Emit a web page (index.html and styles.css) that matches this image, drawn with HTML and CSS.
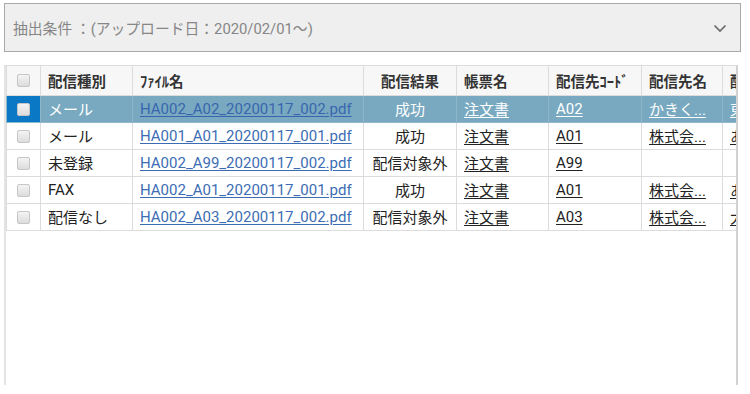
FILE: index.html
```html
<!DOCTYPE html>
<html lang="ja">
<head>
    <meta charset="UTF-8">
    <meta name="viewport" content="width=device-width, initial-scale=1.0">
    <title>配信履歴</title>
    <link rel="stylesheet" href="styles.css">
</head>
<body>
    <div class="page">
        <div class="filter-bar">
            <span class="filter-text">抽出条件 ：(アップロード日：2020/02/01～)</span>
            <svg class="chevron" width="14" height="9" viewBox="0 0 14 9">
                <path d="M1.5 1.5 L7 7 L12.5 1.5" fill="none" stroke="#666" stroke-width="1.6"/>
            </svg>
        </div>

        <div class="grid-wrap">
            <table class="grid">
                <colgroup>
                    <col class="c-check">
                    <col class="c-type">
                    <col class="c-file">
                    <col class="c-result">
                    <col class="c-form">
                    <col class="c-code">
                    <col class="c-name">
                    <col class="c-more">
                </colgroup>
                <thead>
                    <tr>
                        <th class="check"><span class="box"></span></th>
                        <th>配信種別</th>
                        <th>ﾌｧｲﾙ名</th>
                        <th class="center">配信結果</th>
                        <th>帳票名</th>
                        <th>配信先ｺｰﾄﾞ</th>
                        <th>配信先名</th>
                        <th>配信先</th>
                    </tr>
                </thead>
                <tbody>
                    <tr class="selected">
                        <td class="check"><span class="box"></span></td>
                        <td>メール</td>
                        <td><a class="file" href="#">HA002_A02_20200117_002.pdf</a></td>
                        <td class="center">成功</td>
                        <td><a href="#">注文書</a></td>
                        <td><a href="#">A02</a></td>
                        <td><a href="#">かきく...</a></td>
                        <td><a href="#">東京</a></td>
                    </tr>
                    <tr>
                        <td class="check"><span class="box"></span></td>
                        <td>メール</td>
                        <td><a class="file" href="#">HA001_A01_20200117_001.pdf</a></td>
                        <td class="center">成功</td>
                        <td><a href="#">注文書</a></td>
                        <td><a href="#">A01</a></td>
                        <td><a href="#">株式会...</a></td>
                        <td><a href="#">あい</a></td>
                    </tr>
                    <tr>
                        <td class="check"><span class="box"></span></td>
                        <td>未登録</td>
                        <td><a class="file" href="#">HA002_A99_20200117_002.pdf</a></td>
                        <td class="center">配信対象外</td>
                        <td><a href="#">注文書</a></td>
                        <td><a href="#">A99</a></td>
                        <td></td>
                        <td></td>
                    </tr>
                    <tr>
                        <td class="check"><span class="box"></span></td>
                        <td>FAX</td>
                        <td><a class="file" href="#">HA002_A01_20200117_001.pdf</a></td>
                        <td class="center">成功</td>
                        <td><a href="#">注文書</a></td>
                        <td><a href="#">A01</a></td>
                        <td><a href="#">株式会...</a></td>
                        <td><a href="#">あい</a></td>
                    </tr>
                    <tr>
                        <td class="check"><span class="box"></span></td>
                        <td>配信なし</td>
                        <td><a class="file" href="#">HA002_A03_20200117_002.pdf</a></td>
                        <td class="center">配信対象外</td>
                        <td><a href="#">注文書</a></td>
                        <td><a href="#">A03</a></td>
                        <td><a href="#">株式会...</a></td>
                        <td><a href="#">大阪</a></td>
                    </tr>
                </tbody>
            </table>
        </div>
    </div>
</body>
</html>
```

FILE: styles.css
```css
:root {
    --line: #dcdcdc;
    --head-bg: #f7f7f7;
    --sel-bg: #78a9c0;
    --sel-check: #0b78c6;
    --link-blue: #3c6db4;
}

* {
    box-sizing: border-box;
    margin: 0;
    padding: 0;
}

body {
    font-family: Roboto, "Noto Sans CJK JP", sans-serif;
    color: #222;
    background: #fff;
    width: 750px;
    height: 394px;
    overflow: hidden;
}

.page {
    padding: 3px 9px 0 4px;
}

.filter-bar {
    height: 49px;
    background: #efefef;
    border: 1px solid #a9a9a9;
    display: flex;
    align-items: center;
    justify-content: space-between;
    padding: 0 13px 0 8px;
}

.filter-text {
    font-size: 14.8px;
    color: #868686;
}

.chevron {
    margin-top: 2px;
}

.grid-wrap {
    margin: 13px 3px 0 0;
    height: 320px;
    border-left: 2px solid #e4e4e4;
    border-right: 2px solid #d2d2d2;
    border-top: 1px solid var(--line);
    overflow: hidden;
}

.grid {
    table-layout: fixed;
    border-collapse: collapse;
    width: 769px;
    font-size: 14px;
}

.c-check { width: 34px; }
.c-type { width: 92px; }
.c-file { width: 231px; }
.c-result { width: 93px; }
.c-form { width: 92px; }
.c-code { width: 93px; }
.c-name { width: 81px; }
.c-more { width: 53px; }

th, td {
    border: 1px solid var(--line);
    border-top: none;
    padding: 0 7px;
    white-space: nowrap;
    overflow: hidden;
    text-align: left;
}

th {
    height: 29px;
    background: var(--head-bg);
    font-weight: bold;
    font-size: 14.5px;
    color: #333;
}

td {
    height: 27px;
    font-size: 15px;
}

.center {
    text-align: center;
    padding: 0 2px;
}

.check {
    text-align: center;
    padding: 0;
}

.box {
    display: inline-block;
    width: 13px;
    height: 13px;
    border: 1px solid #c6c6c6;
    border-radius: 2px;
    background: linear-gradient(#f4f4f4, #dcdcdc);
    vertical-align: middle;
}

a {
    color: #222;
    text-decoration: underline;
    text-underline-offset: 2px;
}

a.file {
    color: var(--link-blue);
}

.selected td {
    background: var(--sel-bg);
    color: #fff;
    border-color: #8fb7ca;
}

.selected td.check {
    background: var(--sel-check);
}

.selected a {
    color: #fff;
}

.selected a.file {
    color: #3866ae;
}
```
